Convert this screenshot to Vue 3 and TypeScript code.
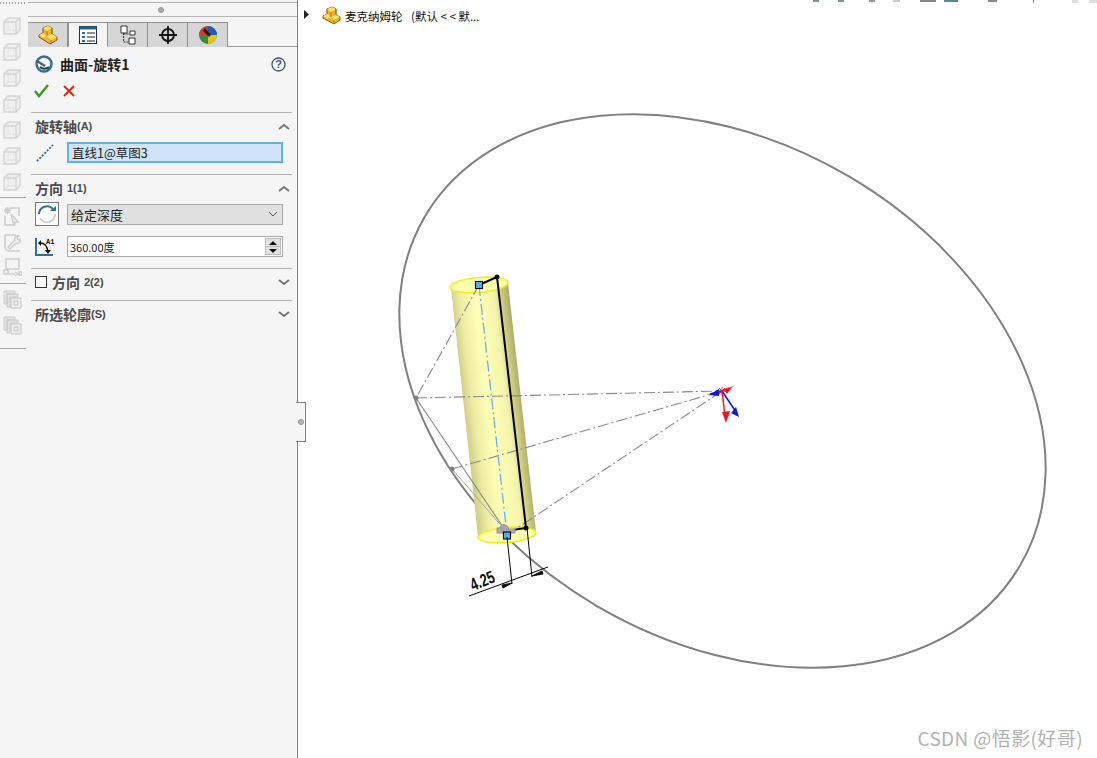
<script setup lang="ts">
const cubeIcons = [1, 2, 3, 4, 5, 6, 7]
const sketchIcons = [
  'M8 2h9v8 M3 10v9h10 M9 8l7 8h-3l-1 4z M3 2l5 5 M8 2L3 7 M5.500 1v7 M2 4.500h7',
  'M3 3h11 M3 3v12a4 4 0 0 0 4 4h11 M6 15l7-7a3 3 0 0 1 4-4l-2 2 1 2 2-1a3 3 0 0 1-4 4l-6 6z',
  'M4 1h13v10H4z M2 12h4v4H2z M6 16h7 M13 14l3 2-3 2 M17 14h3v3h-3z',
]
const tabs = [
  { id: 'part', active: false },
  { id: 'props', active: true },
  { id: 'tree', active: false },
  { id: 'target', active: false },
  { id: 'color', active: false },
]
</script>

<template>
  <div class="app">
    <aside class="sidebar">
      <div class="toolbar">
        <div class="grip"></div>
        <svg v-for="c in cubeIcons" :key="c" class="tool cube" width="18" height="18" viewBox="0 0 18 18">
          <path d="M1 5h12v12H1z M1 5l4-4h12v12l-4 4 M13 5l4-4" fill="#f0f0f0" stroke="#d2d2d2" stroke-width="1.3" />
          <path d="M5 1v12h12 M5 13l-4 4" fill="none" stroke="#dedede" />
        </svg>
        <hr class="tool-sep" />
        <svg v-for="(d, i) in sketchIcons" :key="i" class="tool" width="20" height="20" viewBox="0 0 20 20">
          <path :d="d" fill="none" stroke="#cdcdcd" stroke-width="1.500" />
        </svg>
        <hr class="tool-sep" />
        <svg v-for="c in 2" :key="'c' + c" class="tool" width="20" height="20" viewBox="0 0 20 20">
          <path d="M2 1h11v3H5v10H2z M5 4h11v3H8v10H5z" fill="#e2e2e2" stroke="#cacaca" />
          <path d="M9 8h10v10H9z M12 11h4v4h-4z" fill="#f0f0f0" stroke="#c2c2c2" />
        </svg>
        <hr class="tool-sep" />
      </div>

      <div class="panel">
        <div class="handle"><span></span></div>
        <div class="tabs">
          <div v-for="t in tabs" :key="t.id" class="tab" :class="{ active: t.active }">
            <svg v-if="t.id === 'part'" width="20" height="20" viewBox="0 0 20 20">
              <path d="M1 10l4-2V3l5-2 4 2v6l5 3v3l-7 4-11-7z" fill="#eeb425" stroke="#7a5a10" />
              <path d="M5 3l5-2 4 2-5 3z M9 11l5-2 5 3-6 3z M1 10l4-2 4 3-4 2z" fill="#ffe06e" />
              <path d="M9 6v5 M13 15v4 M14 3v6" fill="none" stroke="#9a7414" stroke-width=".8" />
            </svg>
            <svg v-else-if="t.id === 'props'" width="18" height="18" viewBox="0 0 18 18">
              <rect x=".5" y=".5" width="17" height="17" fill="#fff" stroke="#20323f" />
              <path d="M.5 .5h17v3H.5z" fill="#2e5f80" />
              <path d="M3 6h3v2H3z M3 10h3v2H3z M3 14h3v2H3z" fill="#2e6f9c" />
              <path d="M8 7h8 M8 11h8 M8 15h8" stroke="#222" />
            </svg>
            <svg v-else-if="t.id === 'tree'" width="18" height="20" viewBox="0 0 18 20">
              <path d="M2 1h6v7H2z M11 6h5v4h-5z M10 13h6v6h-6z" fill="#fff" stroke="#333" />
              <path d="M4.500 8v9h5 M4.500 9h6" fill="none" stroke="#333" stroke-dasharray="2 1" />
            </svg>
            <svg v-else-if="t.id === 'target'" width="20" height="20" viewBox="0 0 20 20">
              <circle cx="10" cy="10" r="6" fill="none" stroke="#111" stroke-width="1.800" />
              <path d="M10 1v18 M1 10h18" stroke="#111" stroke-width="1.800" />
            </svg>
            <svg v-else width="20" height="20" viewBox="0 0 20 20">
              <circle cx="10" cy="10" r="9" fill="#2f8f3c" />
              <path d="M10 10L1 10A9 9 0 0 1 10 1z" fill="#d83a2c" />
              <path d="M10 10V1a9 9 0 0 1 9 9z" fill="#2457b8" />
              <path d="M10 10h9a9 9 0 0 1-9 9z" fill="#e8c21c" />
              <path d="M7 3l6 7-2 2-6-6z" fill="#222" />
            </svg>
          </div>
        </div>

        <div class="title-row">
          <svg width="18" height="18" viewBox="0 0 18 18">
            <circle cx="9" cy="9" r="7.500" fill="none" stroke="#2d6f96" stroke-width="2.400" />
            <path d="M2 6l8 5" stroke="#54626c" stroke-width="2.500" />
            <path d="M5 12a6 5 0 0 0 9 0" fill="none" stroke="#173f5c" stroke-width="2" />
          </svg>
          <span class="title">曲面-旋转1</span>
          <svg class="help" width="15" height="15" viewBox="0 0 15 15">
            <circle cx="7.500" cy="7.500" r="6.500" fill="#f4f8fb" stroke="#35566c" stroke-width="1.300" />
            <text x="7.500" y="11.200" text-anchor="middle" class="help-q">?</text>
          </svg>
        </div>
        <div class="actions">
          <svg width="15" height="14" viewBox="0 0 15 14">
            <path d="M1 7l4 5 9-11" fill="none" stroke="#3b9a1a" stroke-width="2.400" />
          </svg>
          <svg width="12" height="12" viewBox="0 0 12 12">
            <path d="M1 1l10 10 M11 1L1 11" stroke="#e02a10" stroke-width="2" />
          </svg>
        </div>

        <section class="group">
          <header class="group-head">
            <span class="head-text">旋转轴<small>(A)</small></span>
            <svg class="chev" width="12" height="7" viewBox="0 0 12 7"><path d="M1 6l5-4 5 4" fill="none" stroke="#777" stroke-width="2" /></svg>
          </header>
          <div class="field-row axis">
            <svg class="field-icon" width="20" height="20" viewBox="0 0 20 20">
              <path d="M2 18L18 2" stroke="#2c6a94" stroke-width="1.800" stroke-dasharray="2 1.500" />
            </svg>
            <div class="selection">直线1@草图3</div>
          </div>
        </section>

        <section class="group">
          <header class="group-head">
            <span class="head-text">方向 <small class="num">1(1)</small></span>
            <svg class="chev" width="12" height="7" viewBox="0 0 12 7"><path d="M1 6l5-4 5 4" fill="none" stroke="#777" stroke-width="2" /></svg>
          </header>
          <div class="field-row dir">
            <div class="dir-btn">
              <svg width="20" height="20" viewBox="0 0 20 20">
                <path d="M2 10a8 8 0 0 1 14-5" fill="none" stroke="#2c7099" stroke-width="2" />
                <path d="M18 10a8 8 0 0 1-15 4" fill="none" stroke="#cfcfcf" stroke-width="2" />
                <path d="M13 7h6V2z" fill="#2c7099" />
              </svg>
            </div>
            <div class="select">
              <span>给定深度</span>
              <svg width="10" height="6" viewBox="0 0 10 6"><path d="M1 1l4 4 4-4" fill="none" stroke="#555" /></svg>
            </div>
          </div>
          <div class="field-row depth">
            <svg class="field-icon" width="20" height="20" viewBox="0 0 20 20">
              <path d="M1 1v17h17" fill="none" stroke="#2c7099" stroke-width="2" />
              <path d="M5 6q7 0 8 9" fill="none" stroke="#111" stroke-width="1.300" />
              <path d="M3 6l3-3v6z M10 13h6l-3 4z" fill="#111" />
              <text x="11" y="7" class="a1">A1</text>
            </svg>
            <div class="spin-input">
              <span>360.00度</span>
              <div class="spin">
                <i class="up"></i>
                <i class="down"></i>
              </div>
            </div>
          </div>
        </section>

        <section class="group">
          <header class="group-head closed">
            <span class="head-text"><em class="check"></em>方向 <small class="num">2(2)</small></span>
            <svg class="chev" width="12" height="7" viewBox="0 0 12 7"><path d="M1 1l5 4 5-4" fill="none" stroke="#777" stroke-width="2" /></svg>
          </header>
        </section>
        <section class="group">
          <header class="group-head closed">
            <span class="head-text">所选轮廓<small>(S)</small></span>
            <svg class="chev" width="12" height="7" viewBox="0 0 12 7"><path d="M1 1l5 4 5-4" fill="none" stroke="#777" stroke-width="2" /></svg>
          </header>
        </section>
      </div>
      <div class="flyout"><span></span></div>
    </aside>

    <main class="viewport">
      <svg class="scene" viewBox="298 0 799 758" width="799" height="758">
        <defs>
          <linearGradient id="cyl" gradientUnits="userSpaceOnUse" x1="451" y1="292" x2="509" y2="285">
            <stop offset="0" stop-color="#d2d28c" />
            <stop offset=".14" stop-color="#ececa4" />
            <stop offset=".4" stop-color="#ffffb8" />
            <stop offset=".72" stop-color="#f4f4aa" />
            <stop offset=".88" stop-color="#c6c67c" />
            <stop offset="1" stop-color="#a8a868" />
          </linearGradient>
        </defs>

        <!-- clipped toolbar icons along the top edge -->
        <g fill="#7d97aa">
          <rect x="813" y="0" width="6" height="2" />
          <rect x="838" y="0" width="6" height="2" />
          <rect x="869" y="0" width="6" height="2" fill="#999" />
          <rect x="893" y="0" width="7" height="2" fill="#ccc" />
          <rect x="920" y="0" width="16" height="2" fill="#888" />
          <rect x="944" y="0" width="14" height="2" fill="#5d87a3" />
          <rect x="988" y="0" width="9" height="2" fill="#888" />
          <rect x="1033" y="0" width="1" height="3" fill="#888" />
          <rect x="1072" y="0" width="6" height="3" fill="#ddd" />
          <rect x="1089" y="0" width="8" height="3" fill="#ddd" />
        </g>

        <path d="M304 10l5 4.500-5 4.500z" fill="#222" />
        <g transform="translate(322 6)">
          <path d="M1 10l4-2V3l5-2 4 2v6l4 2v3l-6 4-11-6z" fill="#eeb425" stroke="#7a5a10" />
          <path d="M5 3l5-2 4 2-5 3z M9 11l5-2 4 2-6 3z M1 10l4-2 4 3-4 2z" fill="#ffe06e" />
          <path d="M9 6v5 M12 14v4 M14 3v6" fill="none" stroke="#9a7414" stroke-width=".8" />
        </g>
        <text x="345" y="21" class="crumb">麦克纳姆轮</text>
        <text x="411" y="21" class="crumb">(默认 &lt; &lt; 默...</text>

        <ellipse cx="722.5" cy="391" rx="345" ry="249" transform="rotate(30.4 722.5 391)" fill="none" stroke="#808080" stroke-width="2" />

        <!-- cylinder -->
        <path d="M451 288L478 537A29 8 -3 0 0 536 532L508 283z" fill="url(#cyl)" />
        <ellipse cx="479" cy="285" rx="29" ry="7.500" transform="rotate(-5 479 285)" fill="#ffffb0" stroke="#f4ee20" stroke-width="1.600" />
        <ellipse cx="507" cy="535" rx="29" ry="7.500" transform="rotate(-5 507 535)" fill="#ffffb0" stroke="#f4ee20" stroke-width="1.600" />

        <!-- construction lines -->
        <g fill="none" stroke="#8a8a8a" stroke-width="1.100" stroke-dasharray="11 3 2 3">
          <path d="M479 285L416 398" />
          <path d="M416 398L722 391" />
          <path d="M452 469L722 391" />
          <path d="M507 535L722 391" />
        </g>
        <path d="M416 398L505 530" fill="none" stroke="#8a8a8a" stroke-width="1.100" />
        <path d="M452 469L505 530" fill="none" stroke="#aaa" stroke-width="1" />
        <path d="M479 285L507 535" fill="none" stroke="#6ab2ea" stroke-width="1.300" stroke-dasharray="11 3 2 3" />
        <circle cx="416" cy="398" r="2.500" fill="#808080" />
        <circle cx="452" cy="469" r="2.500" fill="#808080" />

        <!-- profile -->
        <path d="M479 285L497 277L526 528L507 531" fill="none" stroke="#000" stroke-width="2" />
        <circle cx="497" cy="277" r="2.500" fill="#000" />
        <circle cx="526" cy="528" r="2.500" fill="#000" />
        <g fill="#a8a8a8" stroke="#999">
          <circle cx="504" cy="529" r="4.500" />
          <rect x="497" y="528" width="6" height="5" />
          <rect x="507" y="529" width="8" height="4" />
        </g>
        <rect x="475.500" y="281.500" width="7" height="7" fill="#55aef5" stroke="#000" stroke-width="1.100" />
        <rect x="503.500" y="532" width="7" height="7" fill="#55aef5" stroke="#000" stroke-width="1.100" />

        <!-- dimension -->
        <g stroke="#000" stroke-width="1" fill="none">
          <path d="M507 537L512 584" />
          <path d="M527 528L532 577" />
          <path d="M469 596L548 567" />
        </g>
        <path d="M512 583L502 585L503 588z M532 576L542 571L543 574z" fill="#111" stroke="#111" />
        <text transform="translate(473 591) rotate(-22) scale(.8 1.1)" class="dim">4.25</text>

        <!-- triad -->
        <g fill="none" stroke-width="1.500">
          <path d="M722 391L710 394" stroke="#0b16e0" />
          <path d="M722 391L725 416" stroke="#f0141c" />
          <path d="M722 391L736 412" stroke="#0b16e0" />
          <path d="M722 391L729 388" stroke="#f0141c" />
        </g>
        <path d="M709 395L719 389L719 396z" fill="#0b16e0" />
        <path d="M724 390L733 386L727 394z" fill="#f0141c" />
        <path d="M722 412L730 411L726 423z" fill="#f0141c" />
        <path d="M731 413L736 407L739 417z" fill="#0b16e0" />
        <path d="M719 388l6 6 M725 388l-6 6 M722 387v8 M718 391h8" stroke="#e8101c" stroke-width=".8" />
      </svg>
      <div class="watermark">CSDN @悟影(好哥)</div>
    </main>
  </div>
</template>

<style scoped>
.app {
  display: flex;
  width: 1097px;
  height: 758px;
  overflow: hidden;
  background: #fff;
  font-family: "Noto Sans CJK SC", "Liberation Sans", sans-serif;
}

.sidebar {
  position: relative;
  display: flex;
  flex: none;
  width: 298px;
  background: #f5f5f5;
  border-right: 1px solid #808080;
  box-sizing: border-box;
}

.toolbar {
  display: flex;
  flex: none;
  flex-direction: column;
  align-items: flex-start;
  width: 28px;
  box-sizing: border-box;
}
.grip {
  width: 26px;
  height: 17px;
  background: repeating-linear-gradient(90deg, #9a9a9a 0 1px, transparent 1px 3px) 0 2px / 26px 2px no-repeat;
}
.tool {
  flex: none;
  margin: 0 0 6px 2px;
}
.tool.cube {
  margin: 0 0 8px 3px;
}
.tool-sep {
  width: 26px;
  height: 1px;
  margin: -2px 0 8px;
  border: 0;
  background: #aaa;
}
.tool-sep:nth-of-type(2) {
  margin: -1px 0 6px;
}
.tool-sep:nth-of-type(3) {
  margin: 6px 0 0;
}

.panel {
  flex: 1;
  min-width: 0;
  padding-right: 5px;
}
.handle {
  display: flex;
  align-items: center;
  justify-content: center;
  height: 15px;
  margin: 2px -5px 0 0;
  border-top: 1px solid #b4b4b4;
  border-bottom: 1px solid #b4b4b4;
  box-sizing: border-box;
}
.handle span {
  width: 6px;
  height: 6px;
  margin-right: 3px;
  border-radius: 50%;
  background: #aaa;
  border: 1px solid #999;
  box-sizing: border-box;
}
.tabs {
  display: flex;
  height: 25px;
  margin: 5px -5px 0 0;
  border-bottom: 1px solid #999;
  box-sizing: border-box;
}
.tab {
  display: flex;
  align-items: center;
  justify-content: center;
  width: 40px;
  height: 25px;
  background: #d6d6d6;
  border-top: 1px solid #909090;
  border-right: 1px solid #909090;
  box-sizing: border-box;
}
.tab.active {
  background: #f5f5f5;
  border-left: 1px solid #909090;
  border-bottom: 1px solid #f5f5f5;
}

.title-row {
  display: flex;
  align-items: center;
  height: 18px;
  margin: 8px 0 0 7px;
}
.title {
  margin-left: 7px;
  font-size: 14px;
  font-weight: 700;
  color: #222;
}
.help {
  margin-left: auto;
  margin-right: 6px;
}
.help-q {
  font: 700 11px "Liberation Sans", sans-serif;
  fill: #35566c;
}
.actions {
  display: flex;
  align-items: center;
  gap: 14px;
  height: 14px;
  margin: 11px 0 0 6px;
}

.group {
  margin-left: 3px;
  border-top: 1px solid #b4b4b4;
}
.actions + .group {
  margin-top: 14px;
}
.group-head {
  display: flex;
  align-items: center;
  justify-content: space-between;
  height: 28px;
  padding: 0 2px 0 4px;
}
.group-head.closed {
  height: 31px;
  padding-bottom: 3px;
  box-sizing: border-box;
}
.head-text {
  display: flex;
  align-items: center;
  margin-top: -2px;
  font-size: 14px;
  font-weight: 700;
  color: #4a4a4a;
}
.head-text small {
  font: 700 11px "Liberation Sans", sans-serif;
}
.head-text .num {
  margin-left: 4px;
}
.chev {
  margin-top: -2px;
}
.check {
  width: 12px;
  height: 12px;
  margin-right: 5px;
  border: 1px solid #333;
  background: #fff;
  box-sizing: border-box;
}

.field-row {
  display: flex;
  align-items: center;
  padding: 0 9px 0 4px;
}
.field-row:last-child {
  margin-bottom: 11px;
}
.field-row.axis {
  margin-top: 1px;
}
.field-icon {
  flex: none;
  width: 20px;
  margin-right: 12px;
}
.selection {
  flex: 1;
  height: 21px;
  padding-left: 3px;
  line-height: 17px;
  font-size: 12.500px;
  color: #222;
  background: #cfe4f8;
  border: 2px solid #5fb2e6;
  box-sizing: border-box;
}
.dir {
  margin-top: -1px;
}
.dir-btn {
  display: flex;
  flex: none;
  align-items: center;
  justify-content: center;
  width: 24px;
  height: 24px;
  margin-right: 8px;
  background: #fff;
  border: 1px solid #777;
  box-sizing: border-box;
}
.select {
  display: flex;
  flex: 1;
  align-items: center;
  justify-content: space-between;
  height: 21px;
  padding: 0 4px 0 3px;
  font-size: 13px;
  color: #222;
  background: #e0e0e0;
  border: 1px solid #a8a8a8;
  box-sizing: border-box;
}
.depth {
  margin-top: 10px;
}
.spin-input {
  display: flex;
  flex: 1;
  align-items: center;
  justify-content: space-between;
  height: 21px;
  padding-left: 2px;
  font-size: 11px;
  color: #222;
  background: #fff;
  border: 1px solid #a8a8a8;
  box-sizing: border-box;
}
.spin {
  display: flex;
  flex-direction: column;
  width: 16px;
  height: 17px;
  margin-right: 1px;
  background: #e2e2e2;
  border: 1px solid #bbb;
  box-sizing: border-box;
}
.spin i {
  display: block;
  flex: 1;
  position: relative;
}
.spin i::after {
  content: "";
  position: absolute;
  left: 3px;
  top: 2px;
  border-left: 4px solid transparent;
  border-right: 4px solid transparent;
}
.spin .up {
  border-bottom: 1px solid #bbb;
}
.spin .up::after {
  border-bottom: 4px solid #111;
}
.spin .down::after {
  border-top: 4px solid #111;
}
.a1 {
  font: 700 7px "Liberation Mono", monospace;
  fill: #111;
}

.flyout {
  position: absolute;
  left: 296px;
  top: 402px;
  display: flex;
  align-items: center;
  width: 10px;
  height: 40px;
  background: #f5f5f5;
  border: 1px solid #808080;
  border-left: 0;
  box-sizing: border-box;
}
.flyout span {
  width: 6px;
  height: 6px;
  margin-left: 2px;
  border-radius: 50%;
  background: #b4b4b4;
  border: 1px solid #999;
  box-sizing: border-box;
}

.viewport {
  position: relative;
  flex: 1;
  min-width: 0;
}
.scene {
  position: absolute;
  inset: 0;
  display: block;
}
.crumb {
  font-size: 11.500px;
  fill: #111;
}
.dim {
  font: 700 16px "Liberation Sans", sans-serif;
  fill: #111;
}
.watermark {
  position: absolute;
  right: 14px;
  top: 725px;
  font-size: 19px;
  line-height: 26px;
  letter-spacing: .4px;
  color: #b2b2b2;
  white-space: nowrap;
}
</style>
